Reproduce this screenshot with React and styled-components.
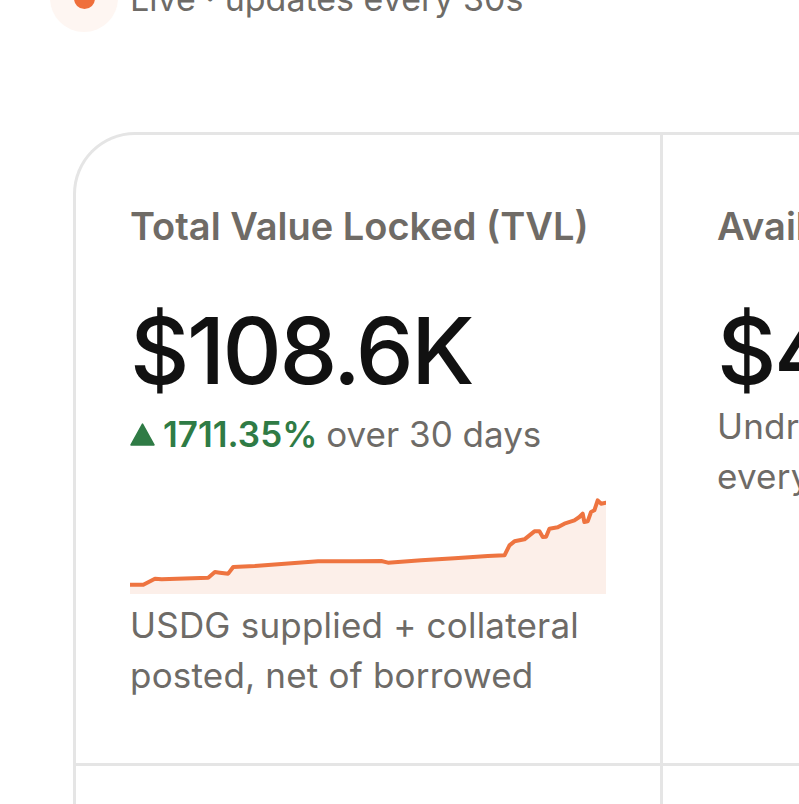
import styled, { createGlobalStyle } from 'styled-components';

const GlobalStyle = createGlobalStyle`
  html, body {
    margin: 0;
    padding: 0;
    background: #ffffff;
    overflow: hidden;
    font-family: Inter, "Noto Sans", sans-serif;
  }
`;

const Page = styled.div`
  width: 799px;
  height: 804px;
  overflow: hidden;
  padding-left: 73px;
  box-sizing: border-box;
`;

const LiveRow = styled.div`
  display: flex;
  align-items: center;
  gap: 12px;
  margin-top: -36px;
  margin-left: -23px;
  height: 68px;
`;

const LiveDot = styled.span`
  width: 68px;
  height: 68px;
  border-radius: 50%;
  background: #fef6f2;
  display: flex;
  align-items: center;
  justify-content: center;
  flex-shrink: 0;

  &::after {
    content: '';
    width: 21px;
    height: 21px;
    border-radius: 50%;
    background: #ef6f3c;
  }
`;

const LiveText = styled.span`
  font-size: 34px;
  color: #6e6b67;
  white-space: nowrap;
`;

const Grid = styled.div`
  margin-top: 100px;
  display: grid;
  grid-template-columns: repeat(3, 587px);
  grid-auto-rows: 631px;
  border-top: 3px solid #e5e5e5;
  border-left: 3px solid #e5e5e5;
  border-top-left-radius: 62px;
  width: max-content;
`;

const Cell = styled.div`
  border-right: 3px solid #e5e5e5;
  border-bottom: 3px solid #e5e5e5;
  padding: 68px 55px 0 54px;
  display: flex;
  flex-direction: column;
  box-sizing: border-box;
`;

const Label = styled.div`
  font-size: 38px;
  font-weight: 600;
  color: #6f6b66;
  line-height: 46px;
  white-space: nowrap;
`;

const Value = styled.div`
  margin-top: 52px;
  font-size: 92px;
  font-weight: 500;
  letter-spacing: -2.5px;
  color: #111111;
  line-height: 100px;
  white-space: nowrap;
`;

const Change = styled.div`
  margin-top: 11px;
  display: flex;
  align-items: center;
  gap: 9px;
  font-size: 35px;
  line-height: 44px;
  color: #6e6b67;
  white-space: nowrap;
`;

const Up = styled.span`
  color: #2f7b45;
  font-weight: 600;
  display: flex;
  align-items: center;
  gap: 8px;
`;

const Chart = styled.svg`
  display: block;
  margin-top: 38px;
  width: 476px;
  height: 100px;
`;

const Note = styled.p`
  margin: ${p => (p.$tight ? '0' : '6px')} 0 0;
  font-size: 35px;
  letter-spacing: 0.2px;
  line-height: 50px;
  color: #6e6b67;
  white-space: ${p => (p.$tight ? 'nowrap' : 'normal')};
`;

const pts = [
  [25, 548], [65, 548], [100, 530], [120, 532], [260, 527], [280, 510], [295, 512],
  [320, 515], [335, 495], [400, 492], [520, 483], [590, 478], [700, 478], [780, 477],
  [800, 482], [900, 475], [1000, 469], [1100, 462], [1150, 460], [1165, 430], [1180, 418],
  [1210, 412], [1225, 400], [1240, 388], [1255, 388], [1265, 405], [1275, 404], [1285, 380],
  [1310, 376], [1330, 365], [1360, 355], [1375, 345], [1385, 335], [1390, 360], [1400, 358],
  [1410, 330], [1420, 325], [1430, 295], [1440, 305], [1455, 302],
];

const line = pts.map(([x, y], i) => `${i ? 'L' : 'M'}${x} ${y}`).join(' ');
const area = `${line} L1455 576 L25 576 Z`;

function Sparkline() {
  return (
    <Chart viewBox="25 276 1430 300" preserveAspectRatio="none">
      <path d={area} fill="#fcefe9" />
      <path
        d={line}
        fill="none"
        stroke="#ee7440"
        strokeWidth="4"
        strokeLinejoin="round"
        strokeLinecap="round"
        vectorEffect="non-scaling-stroke"
      />
    </Chart>
  );
}

function Triangle() {
  return (
    <svg width="25" height="25" viewBox="0 0 24 24">
      <path d="M12 2 L23 22 L1 22 Z" fill="#2f7b45" stroke="#2f7b45" strokeWidth="1.5" strokeLinejoin="round" />
    </svg>
  );
}

export default function App() {
  return (
    <Page>
      <GlobalStyle />
      <LiveRow>
        <LiveDot />
        <LiveText>Live · updates every 30s</LiveText>
      </LiveRow>
      <Grid>
        <Cell>
          <Label>Total Value Locked (TVL)</Label>
          <Value>$108.6K</Value>
          <Change>
            <Up>
              <Triangle />
              1711.35%
            </Up>
            over 30 days
          </Change>
          <Sparkline />
          <Note>USDG supplied + collateral posted, net of borrowed</Note>
        </Cell>
        <Cell>
          <Label>Available Liquidity</Label>
          <Value>$42.9K</Value>
          <Note $tight>Undrawn USDG in the pool,</Note>
          <Note $tight>every block</Note>
        </Cell>
        <Cell />
        <Cell />
        <Cell />
        <Cell />
      </Grid>
    </Page>
  );
}
